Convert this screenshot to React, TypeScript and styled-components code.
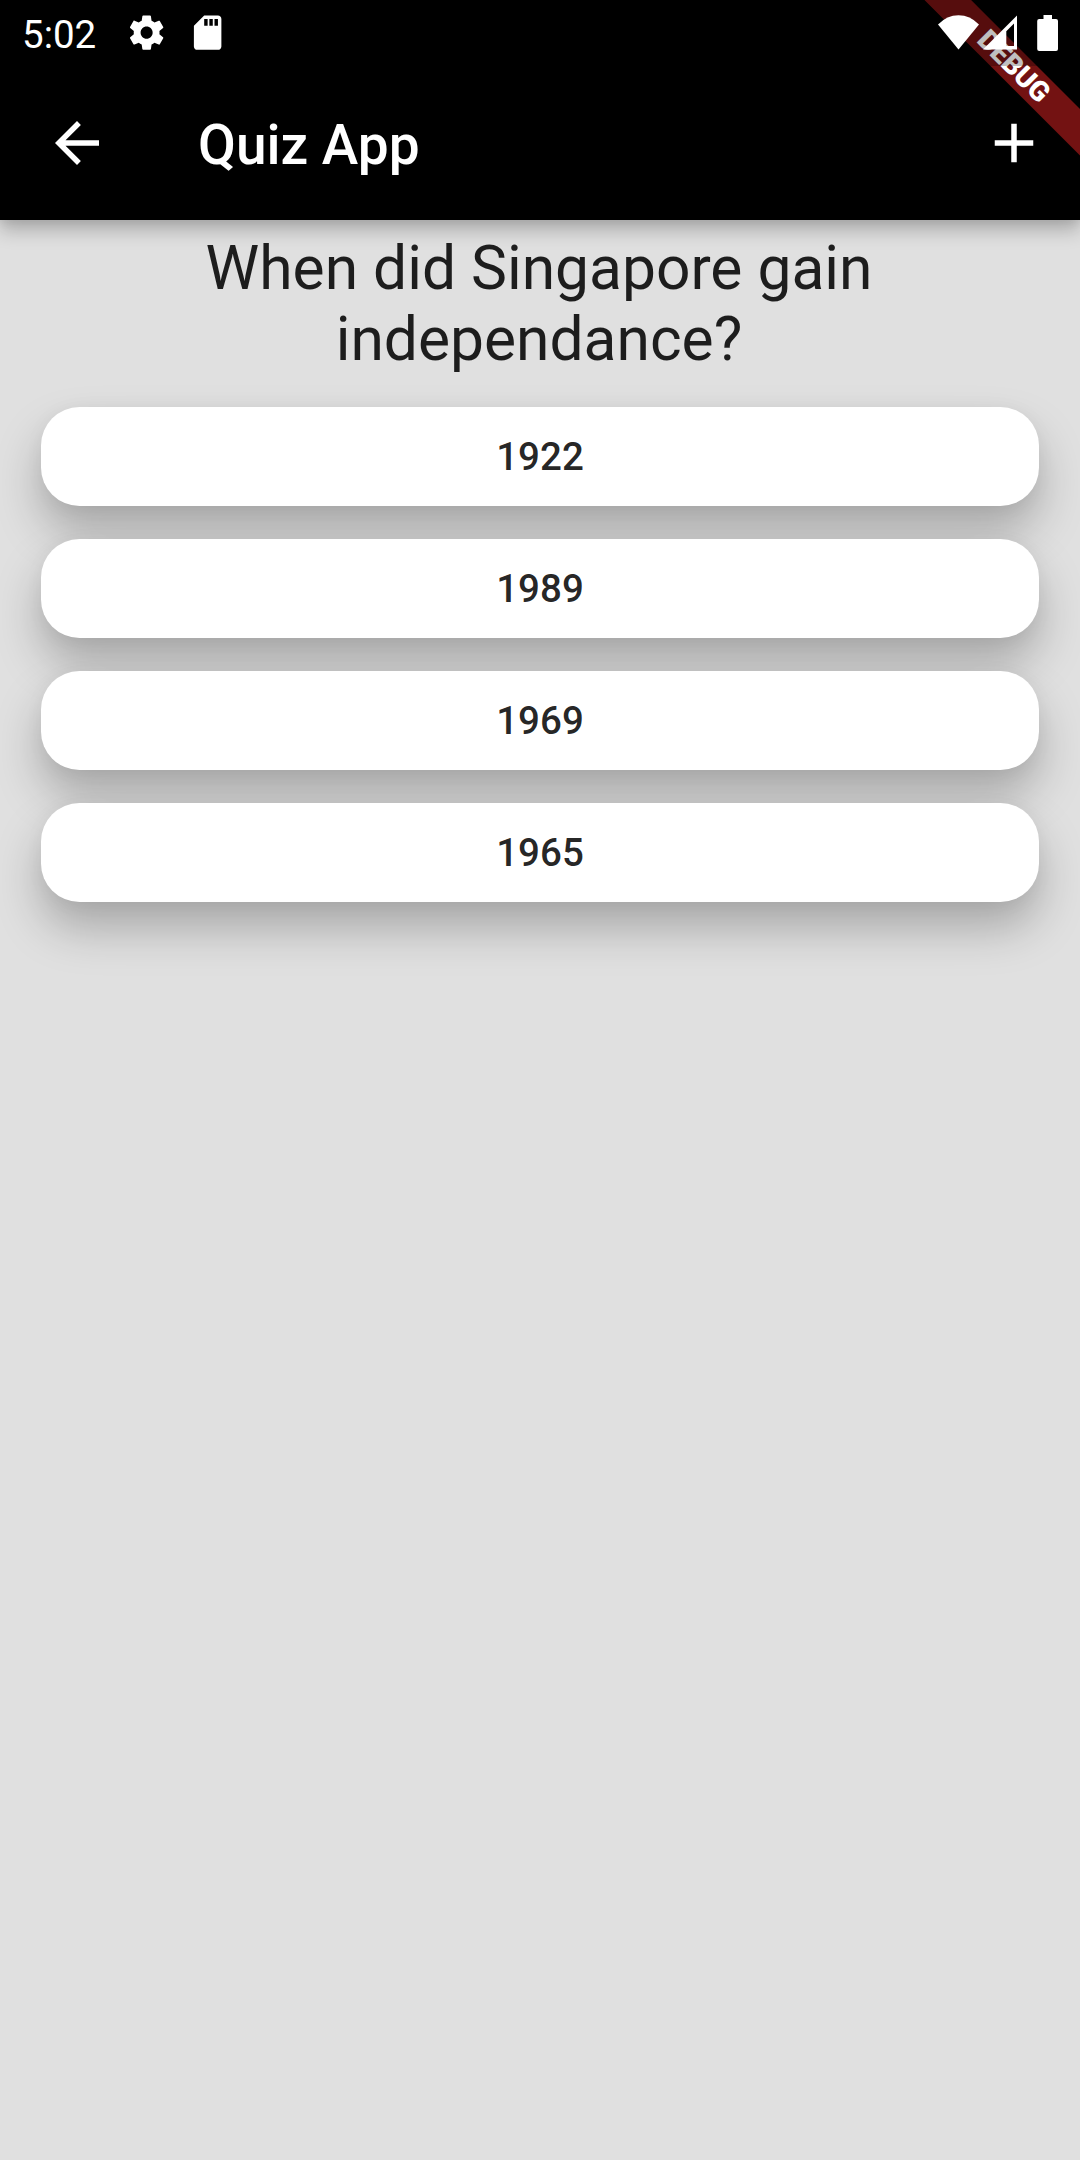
import React from 'react';
import styled, { createGlobalStyle } from 'styled-components';

const GlobalStyle = createGlobalStyle`
  *, *::before, *::after { box-sizing: border-box; }
  html, body { margin: 0; padding: 0; background: #e0e0e0; }
  body { font-family: Roboto, "Liberation Sans", sans-serif; }
`;

const Screen = styled.div`
  position: relative;
  display: flex;
  flex-direction: column;
  width: 1080px;
  height: 2160px;
  overflow: hidden;
  background: #e0e0e0;
`;

const Header = styled.header`
  display: flex;
  flex-direction: column;
  height: 220px;
  flex-shrink: 0;
  background: #000;
  box-shadow: 0 10px 18px rgba(0, 0, 0, 0.24), 0 1px 10px rgba(0, 0, 0, 0.08);
`;

const StatusBar = styled.div`
  position: relative;
  z-index: 2;
  display: flex;
  justify-content: space-between;
  align-items: center;
  height: 66px;
  padding: 0 21px 0 22px;
  background: rgba(0, 0, 0, 0.25);
  color: #fff;
`;

const StatusGroup = styled.div<{ $gap: number }>`
  display: flex;
  align-items: center;
  gap: ${(p) => p.$gap}px;
`;

const Clock = styled.span`
  width: 84px;
  font-size: 38.5px;
  line-height: 46px;
  padding-top: 3px;
`;

const Icon = styled.svg<{ $w: number; $h: number }>`
  display: block;
  flex-shrink: 0;
  width: ${(p) => p.$w}px;
  height: ${(p) => p.$h}px;
  fill: currentColor;
`;

const AppBar = styled.div`
  display: flex;
  align-items: center;
  height: 154px;
  padding: 0 33px 0 44px;
  color: #fff;
`;

const IconButton = styled.button`
  display: flex;
  padding: 0;
  border: 0;
  background: none;
  color: inherit;
`;

const Title = styled.h1`
  flex: 1;
  margin: 0 0 0 88px;
  padding-top: 3px;
  font-size: 55px;
  font-weight: 500;
  line-height: 64px;
`;

const BannerClip = styled.div`
  position: absolute;
  top: 0;
  right: 0;
  z-index: 1;
  width: 170px;
  height: 170px;
  overflow: hidden;
`;

const Banner = styled.div`
  position: absolute;
  top: 77px;
  left: 60px;
  width: 220px;
  height: 33px;
  transform: rotate(45deg);
  transform-origin: 110px -77px;
  background: rgba(183, 28, 28, 0.627);
  color: #fff;
  font-size: 28.05px;
  font-weight: 900;
  letter-spacing: -0.2px;
  line-height: 33px;
  text-align: center;
`;

const Quiz = styled.main`
  display: flex;
  flex-direction: column;
  padding: 13px 41.25px 0;
`;

const Question = styled.h2`
  margin: 0 2px 32px 0;
  color: rgba(0, 0, 0, 0.87);
  font-size: 60.5px;
  font-weight: 400;
  line-height: 71px;
  text-align: center;
`;

const Answers = styled.div`
  display: flex;
  flex-direction: column;
  gap: 33px;
`;

const Answer = styled.button`
  height: 99px;
  padding: 0;
  border: 0;
  border-radius: 38.5px;
  background: #fff;
  box-shadow: 0 26px 46px rgba(0, 0, 0, 0.25), 0 2px 20px rgba(0, 0, 0, 0.04);
  color: rgba(0, 0, 0, 0.87);
  font-family: inherit;
  font-size: 38.5px;
  font-weight: 500;
  line-height: 45px;
`;

const years = ['1922', '1989', '1969', '1965'];

export default function App() {
  return (
    <Screen>
      <GlobalStyle />
      <Header>
        <StatusBar>
          <StatusGroup $gap={20}>
            <Clock>5:02</Clock>
            <Icon $w={41.25} $h={41.25} viewBox="0 0 24 24">
              <path d="M19.43 12.98c.04-.32.07-.64.07-.98s-.03-.66-.07-.98l2.11-1.65c.19-.15.24-.42.12-.64l-2-3.46c-.12-.22-.39-.3-.61-.22l-2.49 1c-.52-.4-1.08-.73-1.69-.98l-.38-2.65C14.46 2.18 14.25 2 14 2h-4c-.25 0-.46.18-.49.42l-.38 2.65c-.61.25-1.17.59-1.69.98l-2.49-1c-.23-.09-.49 0-.61.22l-2 3.46c-.13.22-.07.49.12.64l2.11 1.65c-.04.32-.07.65-.07.98s.03.66.07.98l-2.11 1.65c-.19.15-.24.42-.12.64l2 3.46c.12.22.39.3.61.22l2.49-1c.52.4 1.08.73 1.69.98l.38 2.65c.03.24.24.42.49.42h4c.25 0 .46-.18.49-.42l.38-2.65c.61-.25 1.17-.59 1.69-.98l2.49 1c.23.09.49 0 .61-.22l2-3.46c.12-.22.07-.49-.12-.64l-2.11-1.65zM12 15.5c-1.93 0-3.5-1.57-3.5-3.5s1.57-3.5 3.5-3.5 3.5 1.57 3.5 3.5-1.57 3.5-3.5 3.5z" />
            </Icon>
            <Icon $w={41.25} $h={41.25} viewBox="0 0 24 24">
              <path d="M18 2h-8L4.02 8 4 20c0 1.1.9 2 2 2h12c1.1 0 2-.9 2-2V4c0-1.1-.9-2-2-2zm-6 6h-2V4h2v4zm3 0h-2V4h2v4zm3 0h-2V4h2v4z" />
            </Icon>
          </StatusGroup>
          <StatusGroup $gap={4}>
            <Icon $w={41} $h={36} viewBox="0 0 41 36">
              <path d="M20.5 34.5 0 9.5Q9 0.3 20.5 0.3T41 9.5Z" />
            </Icon>
            <Icon $w={34} $h={36} viewBox="0 0 34 36">
              <path fillRule="evenodd" d="M34 .5V34.5H0ZM31 8.5 23.300 16.200V31H31Z" />
            </Icon>
            <Icon $w={38} $h={36} viewBox="-16 0 38 36">
              <path d="M6.5 0h8.5v4h4a2 2 0 0 1 2 2v28a2 2 0 0 1-2 2H2.200a2 2 0 0 1-2-2V6a2 2 0 0 1 2-2h4.300Z" />
            </Icon>
          </StatusGroup>
        </StatusBar>
        <AppBar>
          <IconButton aria-label="Back">
            <Icon $w={66} $h={66} viewBox="0 0 24 24">
              <path d="M20 11H7.830l5.590-5.590L12 4l-8 8 8 8 1.410-1.410L7.830 13H20v-2z" />
            </Icon>
          </IconButton>
          <Title>Quiz App</Title>
          <IconButton aria-label="Add">
            <Icon $w={66} $h={66} viewBox="0 0 24 24">
              <path d="M19 13h-6v6h-2v-6H5v-2h6V5h2v6h6v2z" />
            </Icon>
          </IconButton>
        </AppBar>
      </Header>
      <BannerClip>
        <Banner>DEBUG</Banner>
      </BannerClip>
      <Quiz>
        <Question>When did Singapore gain independance?</Question>
        <Answers>
          {years.map((year) => (
            <Answer key={year}>{year}</Answer>
          ))}
        </Answers>
      </Quiz>
    </Screen>
  );
}
